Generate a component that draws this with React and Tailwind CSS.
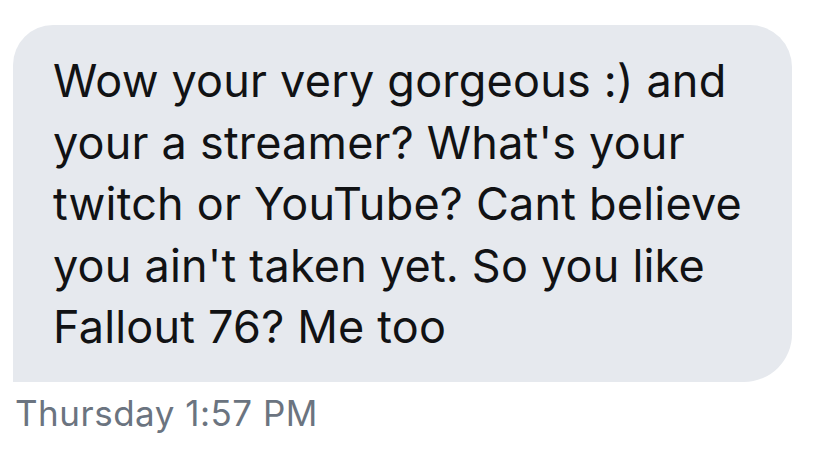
export default function App() {
  return (
    <div className="w-[821px] h-[471px] bg-white overflow-hidden" style={{ fontFamily: "Inter, 'Noto Sans', sans-serif" }}>
      <div className="pt-[25px] pl-[13px]">
        <div className="w-[779px] bg-[#e6e9ee] rounded-tl-[40px] rounded-tr-[42px] rounded-br-[48px] rounded-bl-none pl-[40px] pr-[20px] pt-[25px] pb-[24px]">
          <p className="text-[45px] leading-[61.5px] text-[#111214] whitespace-nowrap tracking-[0.2px]">
            Wow your very gorgeous :) and<br />
            your a streamer? What's your<br />
            twitch or YouTube? Cant believe<br />
            you ain't taken yet. So you like<br />
            Fallout 76? Me too
          </p>
        </div>
        <div className="mt-[11px] pl-[2px] text-[35px] leading-[40px] text-[#6b7480] whitespace-nowrap tracking-[0.5px]">
          Thursday 1:57 PM
        </div>
      </div>
    </div>
  );
}
